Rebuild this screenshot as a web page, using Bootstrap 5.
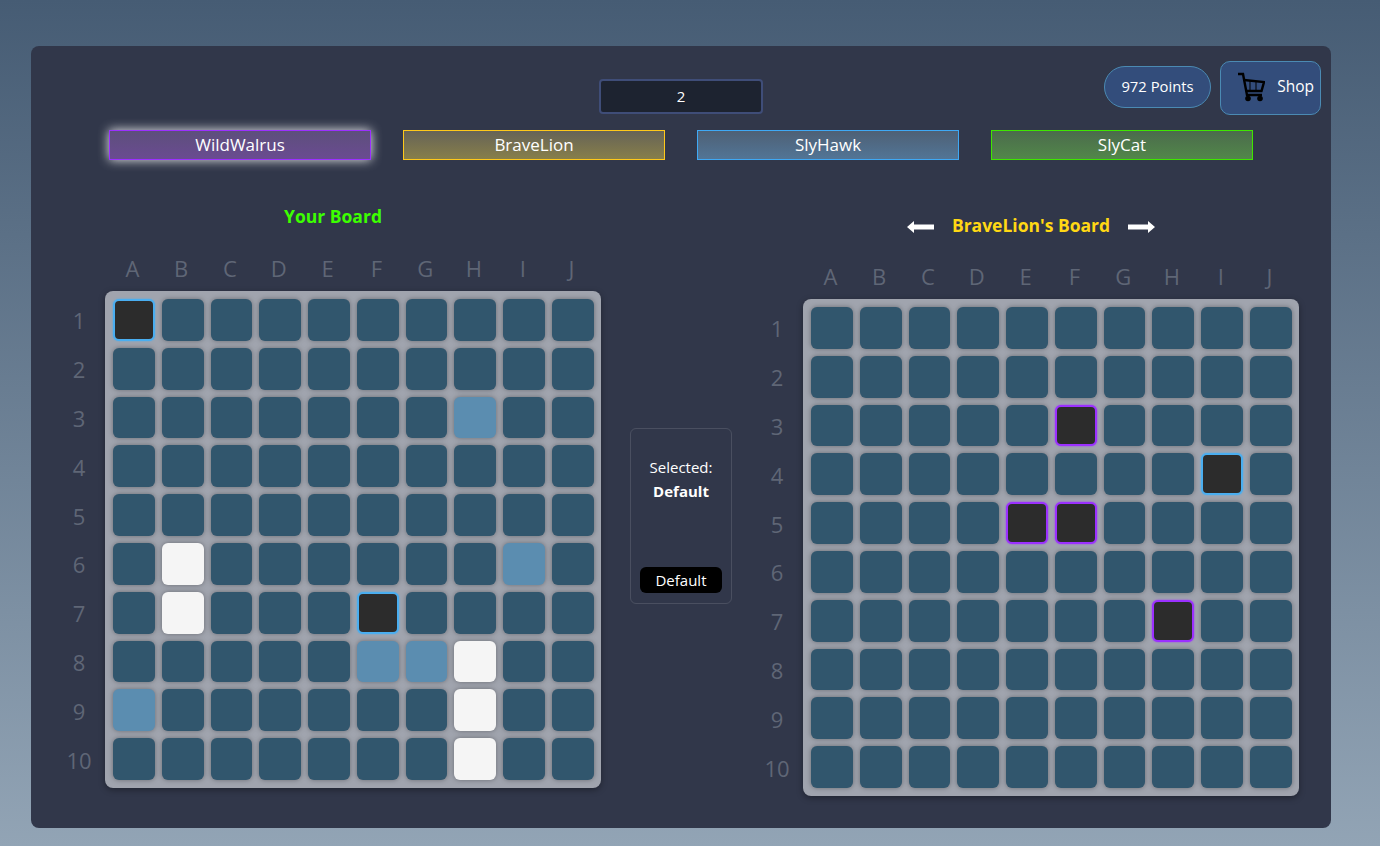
<!DOCTYPE html>
<html lang="en">

<head>
    <meta charset="UTF-8">
    <meta name="viewport" content="width=device-width, initial-scale=1.0">
    <title>Battleship</title>
    <link href="https://cdn.jsdelivr.net/npm/bootstrap@5.3.0/dist/css/bootstrap.min.css" rel="stylesheet">
    <style>
        html, body { height: 100%; }
        body {
            background: linear-gradient(180deg, #465c74 0%, #92a4b5 100%);
            font-family: "Open Sans", "Noto Sans", sans-serif;
            color: #fff;
            padding: 46px 49px 18px 31px;
            overflow: hidden;
        }
        .game-panel {
            height: 782px;
            background: #31374a;
            border-radius: 8px;
            padding: 15px 10px 0 34px;
        }
        .top-grid { display: grid; grid-template-columns: 1fr 164px 1fr; margin-left: -24px; }
        .turn-box {
            height: 35px;
            margin-top: 18px;
            background: #1d2330;
            border: 2px solid #3f4d78;
            border-radius: 4px;
            color: #fff;
            font-size: 15px;
            text-align: center;
            line-height: 31px;
        }
        .top-gap { gap: 9px; }
        .points-pill {
            height: 42px;
            width: 107px;
            margin-top: 5px;
            background: #334d7b;
            border: 1px solid #4b8ab3;
            border-radius: 21px;
            font-size: 14.800px;
            padding-bottom: 1px;
        }
        .shop-btn {
            height: 54px;
            width: 101px;
            background: #334d7b;
            border: 1px solid #4b8ab3;
            border-radius: 10px;
            color: #fff;
            font-size: 15.500px;
            padding: 0 6px 3px 16px;
        }
        .player-row { margin: 15px 0 0 -24px; gap: 32px; }
        .player-tag {
            width: 262px;
            height: 30px;
            border: 1px solid;
            font-size: 17px;
            line-height: 28px;
            text-align: center;
        }
        .tag-purple { border-color: #9b30ff; background: linear-gradient(180deg, #5d4f7c, #6a4b91); box-shadow: 0 0 11px rgba(255, 255, 255, .9); }
        .tag-yellow { border-color: #ffc91a; background: linear-gradient(180deg, #666357, #877f4a); }
        .tag-blue { border-color: #3fa9f5; background: linear-gradient(180deg, #4e6075, #527596); }
        .tag-green { border-color: #3fe600; background: linear-gradient(180deg, #4b6b4c, #52874a); }
        .boards-row { margin-top: 45px; }
        .board-col { width: 536px; }
        .board-col.other { padding-top: 8px; margin-left: 31px; }
        .board-title { height: 24px; font-size: 17.500px; font-weight: 700; line-height: 22px; margin-bottom: 26px; }
        .title-green { color: #3cff00; }
        .title-yellow { color: #ffd814; }
        .title-gap { gap: 18px; }
        .title-arrow { margin-top: 4px; }
        .letter-row {
            display: grid;
            grid-template-columns: repeat(10, 41.8px);
            column-gap: 7px;
            height: 28px;
            margin: 0 0 8px 46.500px;
            font-size: 22px;
            line-height: 26px;
            text-align: center;
            color: #5f6676;
        }
        .number-col {
            width: 28px;
            margin-right: 12px;
            padding: 9px 0 0;
            display: grid;
            grid-template-rows: repeat(10, 41.9px);
            row-gap: 7px;
            font-size: 22px;
            line-height: 41.9px;
            text-align: center;
            color: #5f6676;
        }
        .sea-board {
            width: 496px;
            height: 497px;
            padding: 8px 7.500px 8px 8px;
            background: #a0a4ae;
            border-radius: 8px;
            box-shadow: 0 2px 6px rgba(0, 0, 0, .35);
            display: grid;
            grid-template-columns: repeat(10, 1fr);
            grid-template-rows: repeat(10, 1fr);
            gap: 7px;
        }
        .sea-cell {
            background: #31566d;
            border-radius: 6px;
            box-shadow: 0 0 5px rgba(0, 0, 0, .35);
        }
        .sea-cell.ship { background: #f5f5f5; }
        .sea-cell.miss { background: #5b8db0; }
        .sea-cell.hit-blue { background: #2c2c2c; border: 2px solid #4aaef0; box-shadow: 0 0 2px #4aaef0; }
        .sea-cell.hit-purple { background: #2c2c2c; border: 2px solid #9b30ff; box-shadow: 0 0 2px #9b30ff; }
        .select-box {
            width: 102px;
            height: 176px;
            margin: 223px 0 0 29px;
            border: 1px solid rgba(255, 255, 255, .12);
            border-radius: 6px;
            padding: 26px 4px 10px;
            font-size: 15px;
            line-height: 24px;
        }
        .skin-btn {
            width: 82px;
            height: 26px;
            padding: 0;
            background: #000;
            border: 0;
            border-radius: 6px;
            color: #fff;
            font-size: 15px;
            line-height: 26px;
        }
    </style>
</head>

<body>
    <div class="game-panel">
        <div class="top-grid">
            <div></div>
            <div class="turn-box">2</div>
            <div class="d-flex justify-content-end top-gap">
                <div class="points-pill d-flex align-items-center justify-content-center">972 Points</div>
                <button type="button" class="shop-btn d-flex align-items-center justify-content-between">
                    <svg width="28" height="30" viewBox="0 0 28 30" fill="none" stroke="#000" stroke-width="2.400">
                        <path d="M1 2h5l4 21h15" />
                        <path d="M7 8l20 2-2.500 9H9" />
                        <path d="M13 9v10M19 10v9" stroke-width="1" />
                        <circle cx="11" cy="26.500" r="2.800" fill="#000" stroke="none" />
                        <circle cx="23" cy="26.500" r="2.800" fill="#000" stroke="none" />
                    </svg>
                    <span>Shop</span>
                </button>
            </div>
        </div>

        <div class="player-row d-flex justify-content-center">
            <div class="player-tag tag-purple">WildWalrus</div>
            <div class="player-tag tag-yellow">BraveLion</div>
            <div class="player-tag tag-blue">SlyHawk</div>
            <div class="player-tag tag-green">SlyCat</div>
        </div>

        <div class="boards-row d-flex align-items-start">
            <div class="board-col">
                <div class="board-title title-green text-center">Your Board</div>
                <div class="letter-row"></div>
                <div class="d-flex">
                    <div class="number-col"></div>
                    <div class="sea-board" id="my-board"></div>
                </div>
            </div>

            <div class="select-box text-center d-flex flex-column align-items-center">
                <div>Selected:</div>
                <div class="fw-bold">Default</div>
                <button type="button" class="btn skin-btn mt-auto">Default</button>
            </div>

            <div class="board-col other">
                <div class="board-title title-yellow d-flex justify-content-center align-items-center title-gap">
                    <svg class="title-arrow" width="27" height="12" viewBox="0 0 27 12" fill="#fff"><path d="M0 6l7-6v3.500h20v5H7V12z" /></svg>
                    <span>BraveLion's Board</span>
                    <svg class="title-arrow" width="27" height="12" viewBox="0 0 27 12" fill="#fff"><path d="M27 6l-7-6v3.500H0v5h20V12z" /></svg>
                </div>
                <div class="letter-row"></div>
                <div class="d-flex">
                    <div class="number-col"></div>
                    <div class="sea-board" id="enemy-board"></div>
                </div>
            </div>
        </div>
    </div>

    <script src="https://cdn.jsdelivr.net/npm/bootstrap@5.3.0/dist/js/bootstrap.bundle.min.js"></script>
    <script>
        const letras = "ABCDEFGHIJ".split("");

        document.querySelectorAll(".letter-row").forEach(row => {
            letras.forEach(l => {
                const d = document.createElement("div");
                d.textContent = l;
                row.appendChild(d);
            });
        });

        document.querySelectorAll(".number-col").forEach(col => {
            for (let n = 1; n <= 10; n++) {
                const d = document.createElement("div");
                d.textContent = n;
                col.appendChild(d);
            }
        });

        function fillBoard(id, marks) {
            const board = document.getElementById(id);
            for (let r = 1; r <= 10; r++) {
                letras.forEach(l => {
                    const cell = document.createElement("div");
                    cell.className = "sea-cell " + (marks[l + r] || "");
                    board.appendChild(cell);
                });
            }
        }

        fillBoard("my-board", {
            A1: "hit-blue", H3: "miss", B6: "ship", I6: "miss", B7: "ship", F7: "hit-blue",
            F8: "miss", G8: "miss", H8: "ship", A9: "miss", H9: "ship", H10: "ship"
        });

        fillBoard("enemy-board", {
            F3: "hit-purple", I4: "hit-blue", E5: "hit-purple", F5: "hit-purple", H7: "hit-purple"
        });
    </script>
</body>

</html>
